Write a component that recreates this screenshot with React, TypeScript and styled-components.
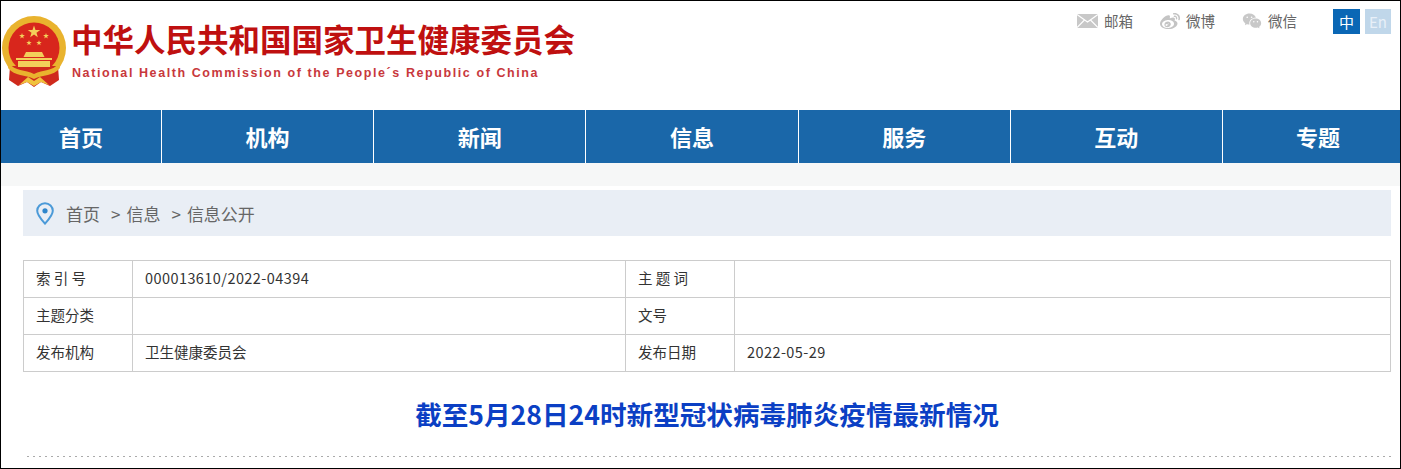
import styled, { createGlobalStyle } from "styled-components";
import { SiSinaweibo } from "react-icons/si";
import { RiWechatFill } from "react-icons/ri";

const GlobalStyle = createGlobalStyle`
  html, body {
    margin: 0;
    padding: 0;
    background: #fff;
    overflow: hidden;
  }
  body {
    font-family: "Noto Sans CJK SC", "Noto Sans", sans-serif;
  }
`;

const Page = styled.div`
  width: 1401px;
  height: 469px;
  box-sizing: border-box;
  border: 1px solid #000;
  overflow: hidden;
  background: #fff;
`;

const Header = styled.header`
  height: 109px;
  display: flex;
  justify-content: space-between;
  align-items: flex-start;
`;

const Brand = styled.div`
  display: flex;
  align-items: flex-start;
  padding-top: 15px;
`;

const BrandText = styled.div`
  margin-left: 4px;
  display: flex;
  flex-direction: column;
`;

const BrandTitle = styled.div`
  margin-top: 2px;
  font-size: 31.5px;
  line-height: 40px;
  font-weight: 700;
  color: #bf1010;
  white-space: nowrap;
`;

const BrandSub = styled.div`
  margin-top: 7px;
  margin-left: 1px;
  font-family: "Liberation Sans", Arial, sans-serif;
  font-size: 12.5px;
  font-weight: 700;
  line-height: 16px;
  letter-spacing: 1.58px;
  color: #c8383c;
  white-space: nowrap;
`;

const TopBar = styled.div`
  display: flex;
  align-items: center;
  padding: 7px 9px 0 0;
`;

const TopLink = styled.a`
  display: flex;
  align-items: center;
  gap: 6px;
  margin-right: 27px;
  font-size: 14.5px;
  line-height: 26px;
  color: #666;
  svg {
    display: block;
  }
`;

const LangButton = styled.a<{ $active?: boolean }>`
  width: ${(p) => (p.$active ? "27px" : "26px")};
  height: 25px;
  margin-left: ${(p) => (p.$active ? "9px" : "5px")};
  display: flex;
  align-items: center;
  justify-content: center;
  font-size: 15px;
  color: ${(p) => (p.$active ? "#fff" : "#e8f0f8")};
  background: ${(p) => (p.$active ? "#0a67b5" : "#c0d7ea")};
`;

const Nav = styled.nav`
  height: 53px;
  display: grid;
  grid-template-columns: 161px repeat(5, 212.2px) 1fr;
  background: #1a67a9;
`;

const NavItem = styled.a<{ $last?: boolean }>`
  display: flex;
  align-items: center;
  justify-content: center;
  padding-left: ${(p) => (p.$last ? "13px" : "0")};
  padding-bottom: 2px;
  border-right: ${(p) => (p.$last ? "none" : "1px solid #fff")};
  font-size: 22px;
  font-weight: 700;
  color: #fff;
`;

const Strip = styled.div`
  height: 23px;
  background: #f6f7f7;
`;

const Content = styled.main`
  padding: 4px 9px 0 22px;
`;

const Breadcrumb = styled.div`
  height: 46px;
  display: flex;
  align-items: center;
  padding-left: 13px;
  background: #e9eef5;
  font-size: 17px;
  color: #666;
`;

const Crumb = styled.span`
  margin-left: 11px;
  &:first-of-type {
    margin-left: 12px;
  }
`;

const Arrow = styled.span`
  margin-right: 6px;
`;

const MetaTable = styled.table`
  width: 100%;
  margin-top: 24px;
  border-collapse: collapse;
  table-layout: fixed;
  font-size: 14.5px;
  color: #333;
`;

const MetaRow = styled.tr`
  height: 37px;
`;

const Cell = styled.td<{ $w?: number; $num?: boolean }>`
  width: ${(p) => (p.$w ? `${p.$w}px` : "auto")};
  box-sizing: border-box;
  padding: 0 12px 2px;
  border: 1px solid #ccc;
  white-space: nowrap;
  line-height: 20px;
  letter-spacing: ${(p) => (p.$num ? "0.43px" : "0")};
`;

const Title = styled.h1`
  margin: 23px 0 0;
  text-align: center;
  font-size: 26.6px;
  line-height: 38px;
  font-weight: 700;
  color: #0b3fc4;
`;

const Divider = styled.div`
  height: 1px;
  margin-top: 23px;
  background: repeating-linear-gradient(to right, #fff 0 4px, #aaa 4px 6px);
`;

const star = (cx: number, cy: number, r: number) => {
  const pts: string[] = [];
  for (let i = 0; i < 10; i++) {
    const rad = i % 2 === 0 ? r : r * 0.4;
    const a = (-90 + i * 36) * (Math.PI / 180);
    pts.push(`${(cx + rad * Math.cos(a)).toFixed(1)},${(cy + rad * Math.sin(a)).toFixed(1)}`);
  }
  return pts.join(" ");
};

const Emblem = () => (
  <svg width="66" height="72" viewBox="0 0 66 72">
    <defs>
      <filter id="soft">
        <feGaussianBlur stdDeviation="0.4" />
      </filter>
    </defs>
    <g filter="url(#soft)">
      <circle cx="33" cy="32" r="32" fill="#e9b32e" />
      <circle cx="33" cy="32" r="25.5" fill="#d8281c" />
      <path d="M9 50 L8 64 L17 70 L26 66 L33 71 L40 66 L49 70 L58 64 L57 50 Z" fill="#cf2a1e" />
      <g fill="#f3cf5a">
        <polygon points={star(33, 16, 6.5)} />
        <polygon points={star(21, 20, 3)} />
        <polygon points={star(45, 20, 3)} />
        <polygon points={star(28, 27, 2.8)} />
        <polygon points={star(38, 27, 2.8)} />
        <path d="M25 36 H41 L43.5 41 H22.5 Z" />
        <path d="M15 42 H51 V44 H15 Z" />
        <path d="M17 45 H49 V51 H17 Z" />
      </g>
      <path
        d="M8 47 C14 56 24 53 33 58 C42 53 52 56 58 47 L59 52 C52 61 42 58 33 63 C24 58 14 61 7 52 Z"
        fill="#e9b32e"
      />
      <path d="M18 69 L27 61 L33 65 L39 61 L48 69 L40 66 L33 70 L26 66 Z" fill="#f0c23e" />
    </g>
  </svg>
);

const MailIcon = () => (
  <svg width="21" height="14" viewBox="0 0 21 14">
    <rect width="21" height="14" fill="#c8c8c8" />
    <path d="M0 0.5 L10.5 8 L21 0.5 M0 13.5 L7.5 6 M21 13.5 L13.5 6" fill="none" stroke="#fff" strokeWidth="1.2" />
  </svg>
);

const PinIcon = () => (
  <svg width="18" height="23" viewBox="0 0 18 23">
    <path
      d="M9 1.2 C4.6 1.2 1.2 4.6 1.2 8.8 C1.2 13.2 5.6 17.8 9 21.6 C12.4 17.8 16.8 13.2 16.8 8.8 C16.8 4.6 13.4 1.2 9 1.2 Z"
      fill="none"
      stroke="#4b9ad8"
      strokeWidth="2"
    />
    <circle cx="9" cy="8.8" r="2.6" fill="#2f86cc" />
  </svg>
);

const navItems = ["首页", "机构", "新闻", "信息", "服务", "互动", "专题"];

const App = () => (
  <>
    <GlobalStyle />
    <Page>
      <Header>
        <Brand>
          <Emblem />
          <BrandText>
            <BrandTitle>中华人民共和国国家卫生健康委员会</BrandTitle>
            <BrandSub>National Health Commission of the People´s Republic of China</BrandSub>
          </BrandText>
        </Brand>
        <TopBar>
          <TopLink>
            <MailIcon />
            邮箱
          </TopLink>
          <TopLink>
            <SiSinaweibo size={20} color="#c4c4c4" />
            微博
          </TopLink>
          <TopLink>
            <RiWechatFill size={20} color="#c8c8c8" />
            微信
          </TopLink>
          <LangButton $active>中</LangButton>
          <LangButton>En</LangButton>
        </TopBar>
      </Header>
      <Nav>
        {navItems.map((item, i) => (
          <NavItem key={item} $last={i === navItems.length - 1}>
            {item}
          </NavItem>
        ))}
      </Nav>
      <Strip />
      <Content>
        <Breadcrumb>
          <PinIcon />
          <Crumb>首页</Crumb>
          <Crumb>
            <Arrow>&gt;</Arrow>信息
          </Crumb>
          <Crumb>
            <Arrow>&gt;</Arrow>信息公开
          </Crumb>
        </Breadcrumb>
        <MetaTable>
          <tbody>
            <MetaRow>
              <Cell $w={109}>索 引 号</Cell>
              <Cell $w={493} $num>
                000013610/2022-04394
              </Cell>
              <Cell $w={109}>主 题 词</Cell>
              <Cell />
            </MetaRow>
            <MetaRow>
              <Cell>主题分类</Cell>
              <Cell />
              <Cell>文号</Cell>
              <Cell />
            </MetaRow>
            <MetaRow>
              <Cell>发布机构</Cell>
              <Cell>卫生健康委员会</Cell>
              <Cell>发布日期</Cell>
              <Cell $num>2022-05-29</Cell>
            </MetaRow>
          </tbody>
        </MetaTable>
        <Title>截至5月28日24时新型冠状病毒肺炎疫情最新情况</Title>
        <Divider />
      </Content>
    </Page>
  </>
);

export default App;
